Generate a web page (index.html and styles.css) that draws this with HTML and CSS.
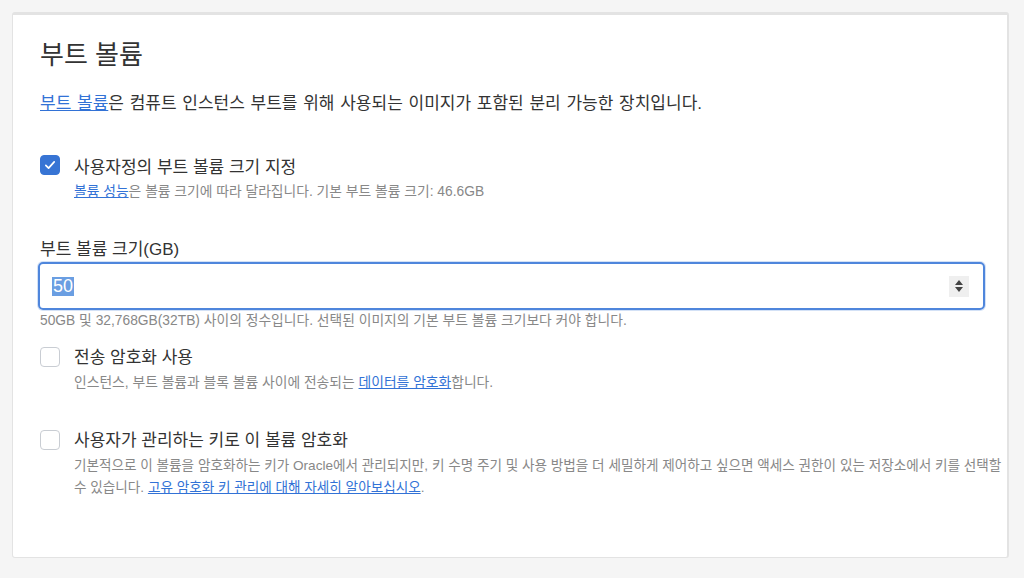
FILE: index.html
```html
<!DOCTYPE html>
<html lang="ko">
<head>
  <meta charset="UTF-8" />
  <title>부트 볼륨</title>
  <meta name="viewport" content="width=device-width, initial-scale=1">
  <link rel="stylesheet" href="styles.css">
</head>
<body>
  <section class="panel">
    <h2 class="panel-title">부트 볼륨</h2>
    <p class="panel-intro"><a href="#" class="link">부트 볼륨</a>은 컴퓨트 인스턴스 부트를 위해 사용되는 이미지가 포함된 분리 가능한 장치입니다.</p>

    <div class="option option-first">
      <span class="check checked">
        <svg viewBox="0 0 20 20" width="14" height="14"><path d="M4 10.5l4 4 8-9" fill="none" stroke="#fff" stroke-width="2.4" stroke-linecap="round" stroke-linejoin="round"/></svg>
      </span>
      <div class="option-body">
        <div class="option-label">사용자정의 부트 볼륨 크기 지정</div>
        <div class="option-help"><a href="#" class="link">볼륨 성능</a>은 볼륨 크기에 따라 달라집니다. 기본 부트 볼륨 크기: 46.6GB</div>
      </div>
    </div>

    <div class="field">
      <label class="field-label">부트 볼륨 크기(GB)</label>
      <div class="number-input">
        <span class="number-value">50</span>
        <span class="spinner">
          <svg viewBox="0 0 10 14" width="10" height="14"><path d="M5 1l4 5H1z M5 13L1 8h8z" fill="#444"/></svg>
        </span>
      </div>
      <div class="field-help">50GB 및 32,768GB(32TB) 사이의 정수입니다. 선택된 이미지의 기본 부트 볼륨 크기보다 커야 합니다.</div>
    </div>

    <div class="option option-second">
      <span class="check"></span>
      <div class="option-body">
        <div class="option-label">전송 암호화 사용</div>
        <div class="option-help">인스턴스, 부트 볼륨과 블록 볼륨 사이에 전송되는 <a href="#" class="link">데이터를 암호화</a>합니다.</div>
      </div>
    </div>

    <div class="option option-last">
      <span class="check"></span>
      <div class="option-body">
        <div class="option-label">사용자가 관리하는 키로 이 볼륨 암호화</div>
        <div class="option-help option-help-wide">기본적으로 이 볼륨을 암호화하는 키가 Oracle에서 관리되지만, 키 수명 주기 및 사용 방법을 더 세밀하게 제어하고 싶으면 액세스 권한이 있는 저장소에서 키를 선택할 수 있습니다. <a href="#" class="link">고유 암호화 키 관리에 대해 자세히 알아보십시오</a>.</div>
      </div>
    </div>
  </section>
</body>
</html>
```

FILE: styles.css
```css
:root {
  --page-bg: #f5f5f5;
  --card-bg: #ffffff;
  --card-border: #e3e3e3;
  --text: #333333;
  --muted: #888888;
  --link: #3272d6;
  --focus: #4f86dc;
  --check: #3774d4;
}
* { box-sizing: border-box; margin: 0; padding: 0; }
body {
  background: var(--page-bg); color: var(--text);
  font-family: "Liberation Sans", "Noto Sans CJK KR", sans-serif;
  padding: 12px 15px 20px 12px;
}
.panel {
  background: var(--card-bg);
  border: 1px solid var(--card-border); border-top-width: 3px;
  border-right-width: 2px;
  border-radius: 3px;
  height: 546px;
  padding: 20px 22px 0 27px;
  overflow: hidden;
}
.panel-title {
  font-size: 26px; font-weight: 400; line-height: 40px; color: #333;
}
.panel-intro {
  font-size: 17px; line-height: 24px; margin-top: 17px; word-spacing: 1px;
}
.link { color: var(--link); text-decoration: underline; }

.option { display: flex; gap: 14px; }
.option-first { margin-top: 37px; }
.option-second { margin-top: 12px; }
.option-last { margin-top: 33px; }
.option-body { padding-top: 2px; }
.check {
  flex: none; width: 20px; height: 20px; margin-top: 3px;
  border: 1.5px solid #c9cdd3; border-radius: 4px; background: #fff;
  display: flex; align-items: center; justify-content: center;
}
.option-first .check { margin-top: 2px; }
.option-first .option-body { padding-top: 3px; }
.check.checked { background: var(--check); border-color: var(--check); }
.option-label { font-size: 17px; line-height: 24px; }
.option-help {
  font-size: 13.8px; line-height: 22px; color: var(--muted); margin-top: 2px;
}
.option-first .option-help { margin-top: 1px; }
.option-help-wide { margin-right: -24px; font-size: 13.6px; }

.field { margin-top: 35px; }
.field-label { display: block; font-size: 17px; line-height: 24px; }
.number-input {
  margin: 0 0 0 -2px; height: 48px;
  border: 2px solid var(--focus); border-radius: 5px;
  box-shadow: 0 0 0 1px rgba(79, 134, 220, 0.25);
  display: flex; align-items: center; justify-content: space-between;
  padding: 0 14px 0 12px;
}
.number-value {
  background: #6a9ee2; color: #fff; font-size: 18px; line-height: 19px;
  padding: 0 1px;
}
.spinner {
  width: 20px; height: 21px; background: #efefef;
  display: flex; align-items: center; justify-content: center;
}
.field-help {
  font-size: 13.8px; line-height: 22px; color: var(--muted);
}
```
